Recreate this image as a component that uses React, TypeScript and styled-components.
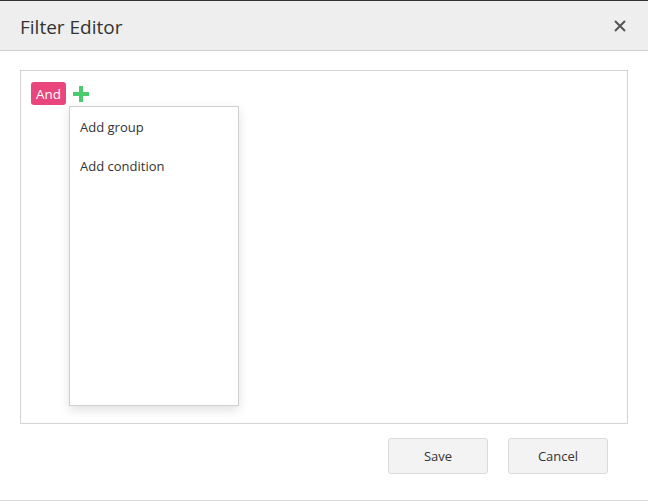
import styled, { createGlobalStyle } from "styled-components";

const GlobalStyle = createGlobalStyle`
  html, body {
    margin: 0;
    padding: 0;
    background: #fff;
    font-family: "Open Sans", "Noto Sans", sans-serif;
  }
`;

const Dialog = styled.div`
  width: 648px;
  height: 501px;
  box-sizing: border-box;
  border-top: 1px solid #333;
  border-bottom: 1px solid #d6d6d6;
  display: flex;
  flex-direction: column;
  background: #fff;
`;

const Header = styled.div`
  height: 49px;
  background: #eeeeee;
  border-bottom: 1px solid #cfcfcf;
  display: flex;
  align-items: center;
  justify-content: space-between;
  padding: 0 20px;
`;

const Title = styled.div`
  font-size: 19px;
  color: #333;
  margin-top: 2px;
`;

const CloseButton = styled.button`
  border: none;
  background: none;
  padding: 0;
  width: 16px;
  height: 16px;
  display: flex;
  cursor: pointer;
`;

const Body = styled.div`
  padding: 19px 20px 0;
`;

const FilterBox = styled.div`
  height: 354px;
  border: 1px solid #d4d4d4;
  box-sizing: border-box;
  padding: 11px 10px;
  position: relative;
`;

const GroupRow = styled.div`
  display: flex;
  align-items: center;
  gap: 7px;
`;

const Badge = styled.span`
  background: #e8467c;
  color: #fff;
  font-size: 13.5px;
  font-weight: 500;
  border-radius: 3px;
  height: 23px;
  padding: 0 5px;
  display: flex;
  align-items: center;
`;

const AddIcon = styled.span`
  display: flex;
  margin-top: 1px;
`;

const Menu = styled.div`
  position: absolute;
  left: 48px;
  top: 35px;
  width: 170px;
  height: 300px;
  box-sizing: border-box;
  background: #fff;
  border: 1px solid #cfcfcf;
  box-shadow: 0 4px 10px rgba(0, 0, 0, 0.12);
  padding-top: 7px;
`;

const MenuItem = styled.div`
  font-size: 13px;
  color: #333;
  padding: 0 10px;
  height: 39px;
  line-height: 26px;
`;

const Footer = styled.div`
  display: flex;
  justify-content: flex-end;
  gap: 20px;
  padding: 14px 20px 0 0;
`;

const Button = styled.button`
  width: 100px;
  height: 36px;
  background: #f3f3f3;
  border: 1px solid #dadada;
  border-radius: 3px;
  font-family: "Open Sans", sans-serif;
  font-size: 13px;
  color: #333;
`;

export default function App() {
  return (
    <>
      <GlobalStyle />
      <Dialog>
        <Header>
          <Title>Filter Editor</Title>
          <CloseButton aria-label="Close">
            <svg width="16" height="16" viewBox="0 0 16 16">
              <path d="M3 3 L13 13 M13 3 L3 13" stroke="#555" strokeWidth="2" />
            </svg>
          </CloseButton>
        </Header>
        <Body>
          <FilterBox>
            <GroupRow>
              <Badge>And</Badge>
              <AddIcon>
                <svg width="16" height="16" viewBox="0 0 16 16">
                  <path d="M6 0 H10 V6 H16 V10 H10 V16 H6 V10 H0 V6 H6 Z" fill="#4ccb6d" />
                </svg>
              </AddIcon>
            </GroupRow>
            <Menu>
              <MenuItem>Add group</MenuItem>
              <MenuItem>Add condition</MenuItem>
            </Menu>
          </FilterBox>
          <Footer>
            <Button>Save</Button>
            <Button>Cancel</Button>
          </Footer>
        </Body>
      </Dialog>
    </>
  );
}
